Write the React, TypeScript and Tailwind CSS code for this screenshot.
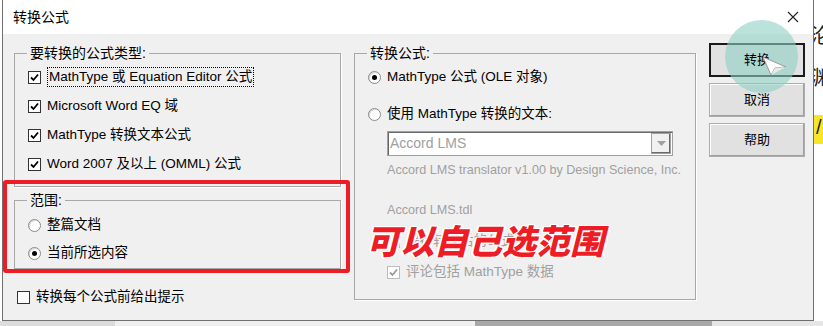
import React from 'react';

const ui = "font-['Liberation_Sans','Noto_Sans_CJK_SC',sans-serif]";

function CheckBox({ checked, disabled }: { checked?: boolean; disabled?: boolean }) {
  return (
    <span
      className={`flex h-[13px] w-[13px] shrink-0 items-center justify-center border bg-white ${
        disabled ? 'border-[#bcbcbc] bg-[#f4f4f4]' : 'border-[#333]'
      }`}
    >
      {checked && (
        <svg width="9" height="9" viewBox="0 0 9 9">
          <path
            d="M1 4.5 L3.5 7 L8 1.5"
            fill="none"
            stroke={disabled ? '#9a9a9a' : '#000'}
            strokeWidth="1.8"
          />
        </svg>
      )}
    </span>
  );
}

function Radio({ checked }: { checked?: boolean }) {
  return (
    <span className="flex h-[13px] w-[13px] shrink-0 items-center justify-center rounded-full border border-[#8a8a8a] bg-white shadow-[inset_1px_1px_0_#d8d8d8]">
      {checked && <span className="h-[5px] w-[5px] rounded-full bg-black" />}
    </span>
  );
}

function Row({ children, className = '' }: { children: React.ReactNode; className?: string }) {
  return <div className={`flex h-[18px] items-center gap-[6px] ${className}`}>{children}</div>;
}

function Button({ label, primary }: { label: string; primary?: boolean }) {
  return (
    <button
      className={`h-[34px] w-[96px] bg-[#e1e1e1] text-[13px] text-black ${
        primary ? 'border-2 border-[#1a1a1a]' : 'border border-[#adadad] shadow-[inset_-1px_-1px_0_#a0a0a0,inset_1px_1px_0_#fff]'
      }`}
    >
      <span className="relative z-10">{label}</span>
    </button>
  );
}

export default function App() {
  return (
    <div className={`relative flex h-[326px] w-[823px] flex-col overflow-hidden bg-white ${ui}`}>
      <div className="flex h-[321px]">
        {/* dialog */}
        <div className="ml-[2px] flex w-[812px] flex-col border-x border-b border-[#707070] bg-[#f0f0f0]">
          <div className="flex h-[34px] items-center justify-between bg-white pl-[10px] pr-[14px]">
            <span className="text-[14px] text-black">转换公式</span>
            <svg width="12" height="12" viewBox="0 0 12 12">
              <path d="M1 1 L11 11 M11 1 L1 11" stroke="#222" strokeWidth="1.1" />
            </svg>
          </div>

          <div className="flex flex-1 text-[13.5px] text-black">
            {/* left column */}
            <div className="ml-[11px] mt-[11px] flex w-[327px] flex-col">
              <fieldset className="h-[142px] border border-[#a8a8a8] shadow-[1px_1px_0_#fff]">
                <legend className="ml-[12px] px-[3px] text-[14px] leading-[17px]">要转换的公式类型:</legend>
                <div className="mt-[6px] flex flex-col gap-[11px] pl-[13px]">
                  <Row>
                    <CheckBox checked />
                    <span className="border border-dotted border-black px-[1px] leading-[18px]">
                      MathType 或 Equation Editor 公式
                    </span>
                  </Row>
                  <Row>
                    <CheckBox checked />
                    <span>Microsoft Word EQ 域</span>
                  </Row>
                  <Row>
                    <CheckBox checked />
                    <span>MathType 转换文本公式</span>
                  </Row>
                  <Row>
                    <CheckBox checked />
                    <span>Word 2007 及以上 (OMML) 公式</span>
                  </Row>
                </div>
              </fieldset>

              <fieldset className="mt-[5px] h-[77px] border border-[#a8a8a8] shadow-[1px_1px_0_#fff]">
                <legend className="ml-[12px] px-[3px] text-[14px] leading-[17px]">范围:</legend>
                <div className="mt-[7px] flex flex-col gap-[10px] pl-[13px]">
                  <Row>
                    <Radio />
                    <span>整篇文档</span>
                  </Row>
                  <Row>
                    <Radio checked />
                    <span>当前所选内容</span>
                  </Row>
                </div>
              </fieldset>

              <Row className="mt-[19px] pl-[3px]">
                <CheckBox />
                <span>转换每个公式前给出提示</span>
              </Row>
            </div>

            {/* right group */}
            <fieldset className="ml-[13px] mt-[11px] h-[255px] w-[342px] border border-[#a8a8a8] shadow-[1px_1px_0_#fff]">
              <legend className="ml-[12px] px-[3px] text-[14px] leading-[17px]">转换公式:</legend>
              <div className="mt-[6px] flex flex-col pl-[13px]">
                <Row>
                  <Radio checked />
                  <span>MathType 公式 (OLE 对象)</span>
                </Row>
                <Row className="mt-[19px]">
                  <Radio />
                  <span>使用 MathType 转换的文本:</span>
                </Row>
                <div className="ml-[19px] flex flex-col text-[#a0a0a0]">
                  <div className="mt-[8px] flex h-[25px] w-[286px] items-center justify-between border border-[#a0a0a0] bg-white pl-[2px] shadow-[inset_1px_1px_0_#696969]">
                    <span className="text-[14px]">Accord LMS</span>
                    <span className="mr-[1px] flex h-[21px] w-[20px] items-center justify-center border border-[#a0a0a0] bg-[#f0f0f0] shadow-[inset_-1px_-1px_0_#696969]">
                      <svg width="9" height="5" viewBox="0 0 9 5">
                        <path d="M0 0 L9 0 L4.5 5 Z" fill="#a0a0a0" />
                      </svg>
                    </span>
                  </div>
                  <span className="mt-[5px] text-[12.6px] leading-[18px]">
                    Accord LMS translator v1.00 by Design Science, Inc.
                  </span>
                  <span className="mt-[22px] text-[12.6px] leading-[18px]">Accord LMS.tdl</span>
                  <Row className="mt-[13px]">
                    <CheckBox disabled />
                    <span>保存转换后的公式</span>
                  </Row>
                  <Row className="mt-[13px]">
                    <CheckBox checked disabled />
                    <span>评论包括 MathType 数据</span>
                  </Row>
                </div>
              </div>
            </fieldset>

            {/* buttons */}
            <div className="ml-[13px] mt-[9px] flex flex-col gap-[6px]">
              <Button label="转换" primary />
              <Button label="取消" />
              <Button label="帮助" />
            </div>
          </div>
        </div>

        {/* document behind the dialog */}
        <div className="flex w-[9px] flex-col overflow-hidden bg-white text-[20px] leading-[24px] text-[#222]">
          <span className="-ml-[4px] mt-[24px] whitespace-nowrap">沦</span>
          <span className="-ml-[4px] mt-[18px] whitespace-nowrap">渊</span>
          <span className="mt-[25px] h-[29px] whitespace-nowrap bg-[#f5e62a] pl-[2px]">/</span>
        </div>
      </div>

      {/* shadow strip below */}
      <div className="flex h-[5px]">
        <div className="w-[115px] bg-[#dcdcdc]" />
        <div className="w-[360px] bg-[#f0f0f0]" />
        <div className="w-[237px] bg-[#a8a8a8]" />
        <div className="flex-1 bg-[#e6e6e6]" />
      </div>

      {/* annotation: red frame */}
      <div className="absolute left-[3px] top-[180px] h-[93px] w-[347px] rounded-[3px] border-[4px] border-[#ee1c25]" />

      {/* annotation: red text */}
      <span className="absolute left-[366px] top-[220px] text-[34px] font-black italic leading-[44px] text-[#ee1c25] [text-shadow:1px_1px_0_#fff,-1px_-1px_0_#fff,1px_-1px_0_#fff,-1px_1px_0_#fff,2px_0_0_#fff,-2px_0_0_#fff]">
        可以自己选范围
      </span>

      {/* cursor highlight */}
      <div className="absolute left-[725px] top-[20px] h-[73px] w-[73px] rounded-full bg-[#8fd0c3]/60" />
      <svg className="absolute left-[762px] top-[56px] z-20" width="26" height="20" viewBox="0 0 26 20">
        <path d="M1 1 L24 11 L13 12 L9 19 Z" fill="#fff" stroke="#9a9a9a" strokeWidth="1" />
        <path d="M9 19 L13 12 L24 11" fill="#e8e8e8" />
      </svg>
    </div>
  );
}
